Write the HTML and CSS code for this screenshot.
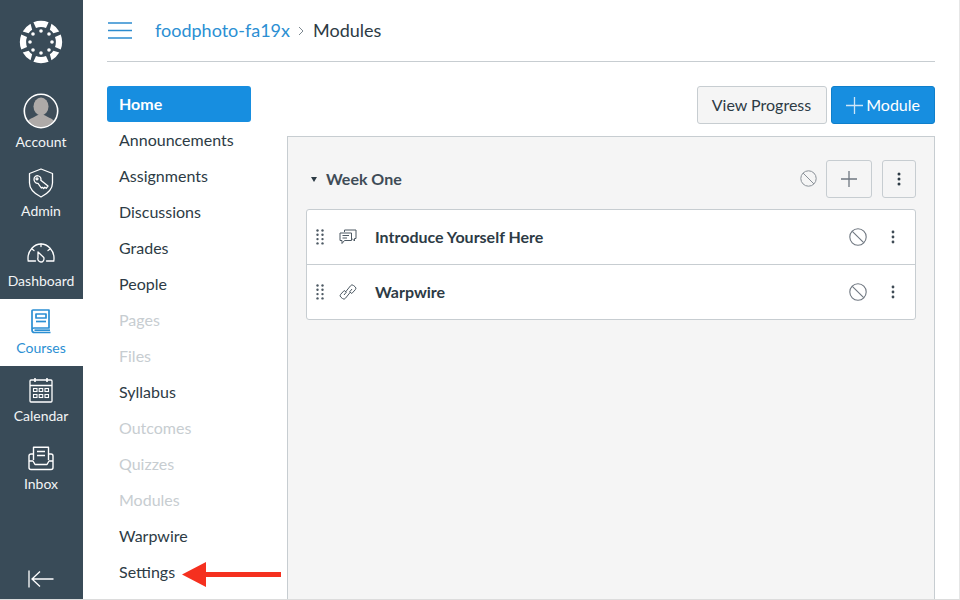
FILE: index.html
```html
<!DOCTYPE html>
<html lang="en">
<head>
<meta charset="utf-8">
<title>Modules</title>
<link rel="stylesheet" href="styles.css">
</head>
<body>
<div class="app">
  <nav class="globalnav">
    <div class="logo">
      <svg width="44" height="44" viewBox="-22 -22 44 44" fill="#fff">
        <defs>
          <path id="wedge" d="M-7.600 -19.700 A21 21 0 0 1 7.600 -19.700 L5 -14 A15 15 0 0 0 -5 -14Z"/>
          <path id="wedge-d" d="M-5.500 -20.300 A21 21 0 0 1 5.500 -20.300 L2.500 -15 A15 15 0 0 0 -2.500 -15Z"/>
        </defs>
        <use href="#wedge"/><use href="#wedge-d" transform="rotate(45)"/><use href="#wedge" transform="rotate(90)"/><use href="#wedge-d" transform="rotate(135)"/>
        <use href="#wedge" transform="rotate(180)"/><use href="#wedge-d" transform="rotate(225)"/><use href="#wedge" transform="rotate(270)"/><use href="#wedge-d" transform="rotate(315)"/>
        <circle cx="0" cy="-11" r="1.800"/><circle cx="8" cy="-8" r="1.800"/><circle cx="11" cy="0" r="1.800"/><circle cx="8" cy="8" r="1.800"/>
        <circle cx="0" cy="11" r="1.800"/><circle cx="-8" cy="8" r="1.800"/><circle cx="-11" cy="0" r="1.800"/><circle cx="-8" cy="-8" r="1.800"/>
      </svg>
    </div>
    <a class="nav-item item-account">
      <svg class="nav-icon" width="36" height="36" viewBox="0 0 36 36">
        <clipPath id="avatar"><circle cx="18" cy="18" r="16"/></clipPath>
        <circle cx="18" cy="18" r="16.5" fill="#3e4d59"/>
        <g clip-path="url(#avatar)" fill="#aeaaa8">
          <ellipse cx="18" cy="13.500" rx="7.500" ry="9"/>
          <path d="M1 36 C1 27 10 25 15 22 L21 22 C26 25 35 27 35 36Z"/>
        </g>
        <circle cx="18" cy="18" r="16.700" fill="none" stroke="#fff" stroke-width="1.600"/>
      </svg>
      <span>Account</span>
    </a>
    <a class="nav-item item-admin">
      <svg class="nav-icon" width="26" height="30" viewBox="0 0 26 30" fill="none" stroke="#fff" stroke-width="1.300" stroke-linejoin="round" stroke-linecap="round">
        <path d="M13 1 L24.500 5.500 V15 C24.500 22 19 26 13 29 C7 26 1.500 22 1.500 15 V5.500Z"/>
        <path d="M6 11.200 C6 8.500 8.500 7.200 10.700 8 C12.500 8.600 13.400 10.600 12.800 12.200 L20 18 L18.200 20.300 L16.800 19.300 L15.700 20.500 L14.300 19.300 L13.300 20 L10 15.300 C8 15.700 6 13.800 6 11.200Z"/>
        <circle cx="9" cy="10.800" r="1"/>
      </svg>
      <span>Admin</span>
    </a>
    <a class="nav-item item-dash">
      <svg class="nav-icon" width="28" height="22" viewBox="0 0 28 22" fill="none" stroke="#fff" stroke-width="1.300" stroke-linecap="round" stroke-linejoin="round">
        <path d="M8.500 19 H1.200 C1 18 1 17.200 1 16 C1 8.500 7 2 14 2 C21 2 27 8.500 27 16 C27 17.200 27 18 26.800 19 H19.500"/>
        <path d="M14 2 V4.500 M5 7 L7 8.500 M23 7 L21 8.500"/>
        <path d="M11 10 L16.800 15.500 C17.500 18 15.800 20.200 13.800 20 C11.500 19.800 10.300 17.500 11 15.500Z"/>
      </svg>
      <span>Dashboard</span>
    </a>
    <a class="nav-item item-courses active">
      <svg class="nav-icon" width="22" height="26" viewBox="0 0 22 26" fill="none" stroke="#2b8fd3" stroke-width="1.700" stroke-linejoin="round">
        <path d="M2 21 V2 A1 1 0 0 1 3 1 H19 V19 H4 C2.800 19 2 20 2 21 C2 22.500 3 23.500 4.500 23.500 H20.500"/>
        <path d="M4.500 21.200 H20"/>
        <rect x="6" y="5" width="10" height="4"/>
        <path d="M6 12.500 H16"/>
      </svg>
      <span>Courses</span>
    </a>
    <a class="nav-item item-cal">
      <svg class="nav-icon" width="24" height="26" viewBox="0 0 24 26" fill="none" stroke="#fff" stroke-width="1.300">
        <rect x="1" y="3" width="22" height="22" rx="1"/>
        <path d="M1 8.500 H23 M6 1 V5 M18 1 V5" stroke-width="1.600"/>
        <g stroke-width="1.100">
          <rect x="4.500" y="11.500" width="3.500" height="3"/><rect x="10.200" y="11.500" width="3.500" height="3"/><rect x="16" y="11.500" width="3.500" height="3"/>
          <rect x="4.500" y="17.500" width="3.500" height="3"/><rect x="10.200" y="17.500" width="3.500" height="3"/><rect x="16" y="17.500" width="3.500" height="3"/>
        </g>
      </svg>
      <span>Calendar</span>
    </a>
    <a class="nav-item item-inbox">
      <svg class="nav-icon" width="26" height="25" viewBox="0 0 26 25" fill="none" stroke="#fff" stroke-width="1.400" stroke-linejoin="round">
        <path d="M5.500 14 V1.200 H20.500 V14"/>
        <path d="M9 5.500 H17 M9 9.500 H17" stroke-width="1.700"/>
        <path d="M5.500 8 H3 A2 2 0 0 0 1 10 V21.500 A2 2 0 0 0 3 23.500 H23 A2 2 0 0 0 25 21.500 V10 A2 2 0 0 0 23 8 H20.500"/>
        <path d="M1 15 H5 L7 18.500 H19 L21 15 H25"/>
      </svg>
      <span>Inbox</span>
    </a>
    <div class="collapse">
      <svg width="26" height="18" viewBox="0 0 26 18" fill="none" stroke="#fff" stroke-width="1.300">
        <path d="M1 0.500 V17.500 M25.500 9 H4 M12 1.500 L4 9 L12 16.500"/>
      </svg>
    </div>
  </nav>
  <div class="main">
    <header class="topbar">
      <svg class="hamburger" width="25" height="17" viewBox="0 0 25 17" fill="none" stroke="#2d8ccf" stroke-width="1.700">
        <path d="M1 1 H25 M1 8.500 H25 M1 16 H25"/>
      </svg>
      <a class="crumb-link">foodphoto-fa19x</a>
      <svg class="crumb-sep" width="6" height="10" viewBox="0 0 6 10" fill="none" stroke="#7d8890" stroke-width="1"><path d="M1 1 L5 5 L1 9"/></svg>
      <span class="crumb-current">Modules</span>
    </header>
    <div class="body">
      <ul class="coursenav">
        <li class="selected">Home</li>
        <li>Announcements</li>
        <li>Assignments</li>
        <li>Discussions</li>
        <li>Grades</li>
        <li>People</li>
        <li class="off">Pages</li>
        <li class="off">Files</li>
        <li>Syllabus</li>
        <li class="off">Outcomes</li>
        <li class="off">Quizzes</li>
        <li class="off">Modules</li>
        <li>Warpwire</li>
        <li>Settings</li>
      </ul>
      <section class="content">
        <div class="actions">
          <button class="btn">View Progress</button>
          <button class="btn btn-primary">
            <svg width="17" height="17" viewBox="0 0 17 17" stroke="#cfe6f7" stroke-width="1.300"><path d="M8.500 0 V17 M0 8.500 H17"/></svg>
            Module
          </button>
        </div>
        <div class="panel">
          <div class="module-head">
            <span class="caret"></span>
            <span class="module-title">Week One</span>
            <svg class="ban-small" width="17" height="17" viewBox="0 0 17 17" fill="none" stroke="#8a9198" stroke-width="1"><circle cx="8.500" cy="8.500" r="7.700"/><path d="M3 3 L14 14"/></svg>
            <button class="mini mini-add">
              <svg width="16" height="16" viewBox="0 0 16 16" stroke="#6f7780" stroke-width="1.300"><path d="M8 0 V16 M0 8 H16"/></svg>
            </button>
            <button class="mini mini-more">
              <svg width="4" height="14" viewBox="0 0 4 14" fill="#2d3b45"><circle cx="2" cy="2" r="1.500"/><circle cx="2" cy="7" r="1.500"/><circle cx="2" cy="12" r="1.500"/></svg>
            </button>
          </div>
          <div class="items">
            <div class="row row-first">
              <svg class="grip" width="8" height="16" viewBox="0 0 8 16" fill="#4d5963"><circle cx="1.500" cy="1.500" r="1.200"/><circle cx="6.500" cy="1.500" r="1.200"/><circle cx="1.500" cy="5.800" r="1.200"/><circle cx="6.500" cy="5.800" r="1.200"/><circle cx="1.500" cy="10.100" r="1.200"/><circle cx="6.500" cy="10.100" r="1.200"/><circle cx="1.500" cy="14.400" r="1.200"/><circle cx="6.500" cy="14.400" r="1.200"/></svg>
              <svg class="type-icon" width="18" height="16" viewBox="0 0 18 16" fill="none" stroke="#4d5963" stroke-width="1" stroke-linejoin="round">
                <path d="M5.500 3 V1 H17 V9.500 H15.500 V12 L13 9.500"/>
                <path d="M1 4 H12.500 V11.500 H5.500 L3 14.500 V11.500 H1Z"/>
                <path d="M3.500 6.500 H10 M3.500 9 H8"/>
              </svg>
              <span class="row-title">Introduce Yourself Here</span>
              <svg class="ban" width="18" height="18" viewBox="0 0 18 18" fill="none" stroke="#6f7780" stroke-width="1.100"><circle cx="9" cy="9" r="8.200"/><path d="M3.300 3.300 L14.700 14.700"/></svg>
              <svg class="more" width="4" height="14" viewBox="0 0 4 14" fill="#3f4b55"><circle cx="2" cy="2" r="1.400"/><circle cx="2" cy="7" r="1.400"/><circle cx="2" cy="12" r="1.400"/></svg>
            </div>
            <div class="row">
              <svg class="grip" width="8" height="16" viewBox="0 0 8 16" fill="#4d5963"><circle cx="1.500" cy="1.500" r="1.200"/><circle cx="6.500" cy="1.500" r="1.200"/><circle cx="1.500" cy="5.800" r="1.200"/><circle cx="6.500" cy="5.800" r="1.200"/><circle cx="1.500" cy="10.100" r="1.200"/><circle cx="6.500" cy="10.100" r="1.200"/><circle cx="1.500" cy="14.400" r="1.200"/><circle cx="6.500" cy="14.400" r="1.200"/></svg>
              <svg class="type-icon" width="18" height="16" viewBox="0 0 18 16" fill="none" stroke="#4d5963" stroke-width="1" stroke-linejoin="round">
                <path d="M6.500 8 L11.500 1.800 A2 2 0 0 1 14.500 1.500 L16 2.700 A2 2 0 0 1 16.300 5.700 L12.800 9.500 L10.700 7.800 L13 5"/>
                <path d="M11.500 8 L6.500 14.200 A2 2 0 0 1 3.500 14.500 L2 13.300 A2 2 0 0 1 1.700 10.300 L5.200 6.500 L7.300 8.200 L5 11"/>
              </svg>
              <span class="row-title">Warpwire</span>
              <svg class="ban" width="18" height="18" viewBox="0 0 18 18" fill="none" stroke="#6f7780" stroke-width="1.100"><circle cx="9" cy="9" r="8.200"/><path d="M3.300 3.300 L14.700 14.700"/></svg>
              <svg class="more" width="4" height="14" viewBox="0 0 4 14" fill="#3f4b55"><circle cx="2" cy="2" r="1.400"/><circle cx="2" cy="7" r="1.400"/><circle cx="2" cy="12" r="1.400"/></svg>
            </div>
          </div>
        </div>
      </section>
    </div>
  </div>
  <svg class="annotation" width="99" height="25" viewBox="0 0 99 25">
    <path d="M0 12.500 L24 0 V10 H99 V15 H24 V25Z" fill="#f5301f"/>
  </svg>
</div>
</body>
</html>
```
FILE: styles.css
```css
* { box-sizing: border-box; }
html, body { margin: 0; height: 100%; background: #fff; }
body { font-family: Lato, "Open Sans", "Liberation Sans", sans-serif; color: #2d3b45; overflow: hidden; }

.app {
  position: relative;
  display: flex;
  width: 960px;
  height: 600px;
  border-right: 1px solid #e6e6e6;
  border-bottom: 1px solid #dcdcdc;
  overflow: hidden;
}

.globalnav {
  flex: 0 0 83px;
  display: flex;
  flex-direction: column;
  background: #394b58;
  color: #fff;
}
.logo { height: 90px; display: flex; justify-content: center; padding: 20px 1px 0 0; }
.nav-item { display: flex; flex-direction: column; align-items: center; font-size: 14px; line-height: 18px; color: #f2f4f5; padding-right: 1px; }
.nav-icon { display: block; flex: none; }
.item-account { height: 72px; padding-top: 3px; }
.item-account span { margin-top: 4px; }
.item-admin { height: 69px; padding-top: 6px; }
.item-admin span { margin-top: 4px; }
.item-dash { height: 68px; padding-top: 11px; }
.item-dash span { margin-top: 8px; }
.item-courses { height: 67px; padding-top: 10px; }
.item-courses span { margin-top: 4px; }
.item-cal { height: 68px; padding-top: 11px; }
.item-cal span { margin-top: 4px; }
.item-inbox { height: 68px; padding-top: 12px; }
.item-inbox span { margin-top: 4px; }
.nav-item.active { background: #fff; color: #2b8fd3; }
.collapse { margin-top: auto; height: 29px; display: flex; justify-content: center; padding-right: 1px; }

.main { flex: 1; display: flex; flex-direction: column; padding: 0 24px; min-width: 0; }
.topbar { height: 62px; flex: none; display: flex; align-items: center; border-bottom: 1px solid #c7cdd1; font-size: 18px; padding-bottom: 1px; }
.hamburger { margin-right: 23px; }
.crumb-link { color: #2b8fd3; }
.crumb-sep { margin: 2px 9px 0 8px; }
.crumb-current { color: #2d3b45; }

.body { flex: 1; display: flex; min-height: 0; padding-top: 24px; }
.coursenav { list-style: none; margin: 0; padding: 0; width: 144px; flex: none; font-size: 16px; }
.coursenav li { height: 36px; line-height: 36px; padding-left: 12px; color: #2d3b45; white-space: nowrap; }
.coursenav li.off { color: #c7cdd1; }
.coursenav li.selected { background: #178ee0; color: #fff; font-weight: 700; border-radius: 3px; }

.content { flex: 1; margin-left: 36px; min-width: 0; display: flex; flex-direction: column; }
.actions { display: flex; justify-content: flex-end; gap: 4px; height: 38px; }
.btn {
  height: 38px;
  font: 16px/1 Lato, sans-serif;
  padding: 0 15px 0 14px;
  background: #f5f5f5;
  color: #2d3b45;
  border: 1px solid #c7cdd1;
  border-radius: 3px;
  display: flex;
  align-items: center;
}
.btn-primary { background: #178ee0; color: #fff; border-color: #0f7fcb; gap: 3px; padding: 0 14px; }

.panel { flex: 1; margin-top: 12px; background: #f5f5f5; border: 1px solid #c7cdd1; border-bottom: 0; padding: 0 18px; }
.module-head { height: 72px; display: flex; align-items: center; padding-top: 11px; }
.caret { width: 0; height: 0; border: 3.500px solid transparent; border-top: 5px solid #2d3b45; border-bottom: 0; margin: 2px 9px 0 5px; }
.module-title { font-size: 16px; font-weight: 700; color: #3f4c57; flex: 1; }
.ban-small { margin-right: 9px; }
.mini { height: 38px; background: #f5f5f5; border: 1px solid #c7cdd1; border-radius: 3px; padding: 0; display: flex; align-items: center; justify-content: center; }
.mini-add { width: 46px; margin-right: 10px; }
.mini-more { width: 34px; }

.items { background: #fff; border: 1px solid #c7cdd1; border-radius: 3px; }
.row { height: 55px; display: flex; align-items: center; padding: 0 20px 0 9px; }
.row-first { height: 54px; }
.row + .row { border-top: 1px solid #c7cdd1; }
.grip { margin-right: 15px; }
.type-icon { margin-right: 18px; }
.row-title { flex: 1; font-size: 16px; font-weight: 700; color: #2d3b45; margin-top: -2px; }
.ban { margin-right: 24px; }

.annotation { position: absolute; left: 182px; top: 562px; }
```
